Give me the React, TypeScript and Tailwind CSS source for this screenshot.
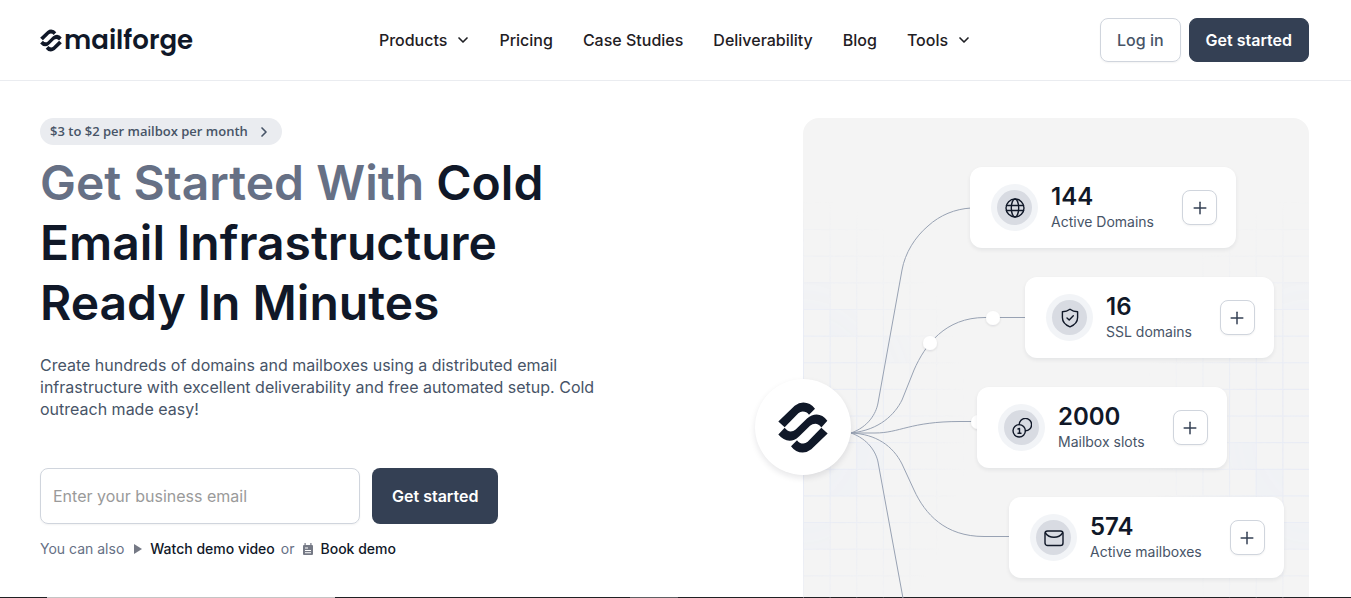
import { ChevronDown, ChevronRight, Plus } from 'lucide-react';
import type { ReactNode } from 'react';

const navItems = [
  { label: 'Products', menu: true },
  { label: 'Pricing' },
  { label: 'Case Studies' },
  { label: 'Deliverability' },
  { label: 'Blog' },
  { label: 'Tools', menu: true },
];

const navCls = 'flex items-center text-base leading-6 font-medium text-[#1f2024]';
const darkBtnCls = 'rounded-lg bg-[#344054] text-base font-semibold text-white';

function LogoMark({ className }: { className?: string }) {
  return (
    <svg viewBox="0 0 150 152" className={className} fill="#101828" aria-hidden="true">
      <path d="M1 58 L50 11 Q63 1 76 1 Q97 1 111 20 L93 38 Q86 28 74 28 Q67 28 61 33 L20 75 Z" />
      <path d="M1 97 L20 77 Q28 88 38 88 Q46 88 53 82 L87 49 Q101 37 116 37 Q134 37 148 56 L130 76 Q122 65 112 65 Q103 65 96 71 L63 103 Q49 116 35 116 Q16 115 1 97 Z" />
      <path d="M149 94 L100 141 Q87 151 74 151 Q53 151 39 132 L57 114 Q64 124 76 124 Q83 124 89 119 L130 77 Z" />
    </svg>
  );
}

const stroke = { fill: 'none', stroke: '#101828', strokeWidth: 1.4, strokeLinecap: 'round', strokeLinejoin: 'round' } as const;

function GlobeIcon() {
  return (
    <svg width="20" height="20" viewBox="0 0 20 20" {...stroke} aria-hidden="true">
      <circle cx="10" cy="10" r="9" />
      <ellipse cx="10" cy="10" rx="3.7" ry="9" />
      <path d="M1.4 7.5h17.2M1.4 12.5h17.2" />
    </svg>
  );
}

function ShieldIcon() {
  return (
    <svg width="20" height="20" viewBox="0 0 20 20" {...stroke} aria-hidden="true">
      <path d="M10 1.2 C12.4 3 14.8 3.7 17.6 3.8 V9.5 C17.6 14 14.6 17 10 18.8 C5.4 17 2.4 14 2.4 9.5 V3.8 C5.2 3.7 7.6 3 10 1.2 Z" />
      <path d="M7 10 L9.2 12 L13.3 7.8" />
    </svg>
  );
}

function CoinsIcon() {
  return (
    <svg width="20" height="20" viewBox="0 0 20 20" {...stroke} aria-hidden="true">
      <circle cx="7.2" cy="12.8" r="6.2" />
      <path d="M7.2 6.6 A6.2 6.2 0 1 1 13.4 12.8" />
      <path d="M6 11 L7.5 10.4 V15.2 M6 15.2 H9" />
    </svg>
  );
}

function EnvelopeIcon() {
  return (
    <svg width="20" height="20" viewBox="0 0 20 20" {...stroke} aria-hidden="true">
      <rect x="1" y="3" width="18" height="14.5" rx="2.6" />
      <path d="M1.4 5 C3.5 8 6.5 9.2 10 9.2 C13.5 9.2 16.5 8 18.6 5" />
    </svg>
  );
}

const stats: { value: string; label: string; icon: ReactNode; offset: string }[] = [
  { value: '144', label: 'Active Domains', icon: <GlobeIcon />, offset: 'ml-[167px]' },
  { value: '16', label: 'SSL domains', icon: <ShieldIcon />, offset: 'ml-[222px]' },
  { value: '2000', label: 'Mailbox slots', icon: <CoinsIcon />, offset: 'ml-[174px]' },
  { value: '574', label: 'Active mailboxes', icon: <EnvelopeIcon />, offset: 'ml-[206px]' },
];

function StatCard({ value, label, icon, offset }: { value: string; label: string; icon: ReactNode; offset: string }) {
  return (
    <li className={`${offset} flex w-max items-center rounded-xl bg-white py-[17px] pr-[19px] pl-[21px] shadow-[0_2px_4px_rgba(16,24,40,0.07)]`}>
      <span className="flex size-[47px] items-center justify-center rounded-full bg-[#f2f4f7]">
        <span className="flex size-[35px] items-center justify-center rounded-full bg-[#d8dbe2]">{icon}</span>
      </span>
      <div className="mr-7 ml-[13px]">
        <p className="text-2xl leading-[26px] font-semibold text-[#101828]">{value}</p>
        <p className="mt-0.5 text-sm leading-[19px] text-[#475467]">{label}</p>
      </div>
      <button aria-label={`Add ${label}`} className="flex size-[35px] items-center justify-center rounded-lg border border-[#d0d5dd] bg-white text-[#344054] shadow-xs">
        <Plus size={20} strokeWidth={1.8} />
      </button>
    </li>
  );
}

const CELL = 506 / 19;
const cells = [[0, 6], [1, 7], [3, 8], [2, 12], [1, 13], [0, 15], [18, 6], [16, 12], [17, 13], [18, 15]];

function Connections() {
  return (
    <svg className="absolute top-0 left-0 overflow-visible" width="506" height="480" viewBox="0 0 506 480" aria-hidden="true">
      <defs>
        <pattern id="grid" width={CELL} height={CELL} y="4.6" patternUnits="userSpaceOnUse">
          <path d={`M0 .5H${CELL}M.5 0V${CELL}`} stroke="#e6eaf5" fill="none" />
        </pattern>
        <radialGradient id="fade">
          <stop offset="0" stopColor="#fff" />
          <stop offset="0.4" stopColor="#fff" stopOpacity="0.8" />
          <stop offset="1" stopColor="#fff" stopOpacity="0" />
        </radialGradient>
        <mask id="corners" maskUnits="userSpaceOnUse" x="0" y="0" width="506" height="480">
          <ellipse cx="0" cy="310" rx="165" ry="230" fill="url(#fade)" />
          <ellipse cx="506" cy="310" rx="165" ry="230" fill="url(#fade)" />
        </mask>
        <filter id="dotShadow" x="-50%" y="-50%" width="200%" height="200%">
          <feDropShadow dx="0" dy="1" stdDeviation="1" floodColor="#101828" floodOpacity="0.12" />
        </filter>
      </defs>
      <g mask="url(#corners)">
        {cells.map(([col, row]) => (
          <rect key={`${col}-${row}`} x={col * CELL} y={4.6 + row * CELL} width={CELL} height={CELL} fill="#eff1f5" />
        ))}
        <rect width="506" height="480" fill="url(#grid)" />
      </g>
      <g fill="none" stroke="#98a2b3">
        <path d="M48 315 C65 309 73 296 75 285 L99 152 C102 135 112 119 125 108 C137 97 152 91 168 90" />
        <path d="M48 315 C77 312 92 296 99 282 L111 252 C122 227 142 199.500 182 199.500 H222" />
        <path d="M48 315 H72 C97 315 107 303.500 157 303.500 H174" />
        <path d="M48 315 C73 316 90 328 99 346 L111 372 C122 396 142 418.500 181 418.500 H206" />
        <path d="M48 315 C65 321 73 334 75 344 L122 600" />
      </g>
      <g fill="#fff" filter="url(#dotShadow)">
        <circle cx="190" cy="200" r="7" />
        <circle cx="127" cy="225" r="7" />
        <circle cx="175" cy="304" r="7" />
      </g>
    </svg>
  );
}

function Header() {
  return (
    <header className="grid grid-cols-[1fr_auto_1fr] items-center border-b border-[#eaecf0] py-[18px] pr-[42px] pl-10">
      <a href="#home" className="flex items-center gap-0.5">
        <LogoMark className="h-[23px] w-[22px]" />
        <span className="font-[Poppins,Inter,sans-serif] text-[26px] leading-8 font-semibold text-[#101828]">mailforge</span>
      </a>
      <nav className="flex items-center gap-[30px]">
        {navItems.map(item =>
          item.menu ? (
            <button key={item.label} className={navCls}>
              {item.label}
              <ChevronDown size={16} strokeWidth={2.5} className="-mr-0.5 ml-2" />
            </button>
          ) : (
            <a key={item.label} href="#nav" className={navCls}>{item.label}</a>
          )
        )}
      </nav>
      <div className="flex justify-end gap-2">
        <button className="h-11 rounded-lg border border-[#d0d5dd] px-4 text-base font-medium text-[#475467] shadow-xs">Log in</button>
        <button className={darkBtnCls + ' h-11 border border-[#344054] px-4'}>Get started</button>
      </div>
    </header>
  );
}

export default function App() {
  return (
    <div className="flex h-screen flex-col overflow-hidden bg-white font-[Inter,sans-serif]">
      <Header />
      <main className="flex min-h-0 flex-1 justify-between pt-[37px] pr-[42px] pl-10">
        <section className="max-w-[570px]">
          <a href="#pricing" className="flex h-[27px] w-max items-center rounded-full bg-[#eaecf0] px-2.5 font-['Open_Sans',sans-serif] text-[13px] font-semibold text-[#475467]">
            $3 to $2 per mailbox per month
            <ChevronRight size={16} strokeWidth={2.5} className="ml-2" />
          </a>
          <h1 className="mt-2 text-5xl leading-[60px] font-semibold text-[#101828]">
            <span className="text-[#667085]">Get Started With</span> Cold Email Infrastructure Ready In Minutes
          </h1>
          <p className="mt-[21px] text-base leading-[22px] text-[#475467]">
            Create hundreds of domains and mailboxes using a distributed email infrastructure with excellent deliverability and free automated setup. Cold outreach made easy!
          </p>
          <form className="mt-12 flex gap-3" onSubmit={e => e.preventDefault()}>
            <input type="email" aria-label="Business email" placeholder="Enter your business email" className="h-14 w-80 rounded-lg border border-[#d0d5dd] px-3 text-base shadow-xs placeholder:text-[#9a9a9a]" />
            <button className={darkBtnCls + ' h-14 px-5'}>Get started</button>
          </form>
          <div className="mt-[15px] flex items-center text-sm leading-5 text-[#667085]">
            You can also
            <a href="#video" className="ml-2.5 flex items-center gap-2 font-medium text-[#101828]">
              <svg width="8" height="10" viewBox="0 0 8 10" fill="#757985" aria-hidden="true"><path d="M0 0 L8 5 L0 10 Z" /></svg>
              Watch demo video
            </a>
            <span className="ml-1.5">or</span>
            <a href="#book" className="ml-2 flex items-center gap-1.5 font-medium text-[#101828]">
              <svg width="12" height="12" viewBox="0 0 12 12" aria-hidden="true">
                <path d="M2.500 0h1.200v2h4.600V0h1.200v2H10a1 1 0 0 1 1 1v8a1 1 0 0 1-1 1H2a1 1 0 0 1-1-1V3a1 1 0 0 1 1-1h.5Z" fill="#757985" />
                <path d="M3 4.500h3v1H3zM3 7h6v1H3zM3 9.300h6v1H3z" fill="#fff" />
              </svg>
              Book demo
            </a>
          </div>
        </section>
        <section className="relative w-[506px] shrink-0 rounded-t-2xl bg-[#f4f4f4]">
          <Connections />
          <div className="absolute top-[261px] -left-12 flex size-24 items-center justify-center rounded-full bg-white shadow-[0_3px_6px_rgba(16,24,40,0.1)]">
            <LogoMark className="h-[51px] w-[50px]" />
          </div>
          <ul className="relative flex flex-col gap-[29px] pt-[49px]">
            {stats.map(s => <StatCard key={s.label} {...s} />)}
          </ul>
        </section>
      </main>
      <footer className="flex h-px shrink-0 bg-[#202124]">
        <span className="ml-[47px] w-72 bg-[#c4c4c4]" />
        <span className="ml-[295px] w-12 bg-[#5f6063]" />
      </footer>
    </div>
  );
}
